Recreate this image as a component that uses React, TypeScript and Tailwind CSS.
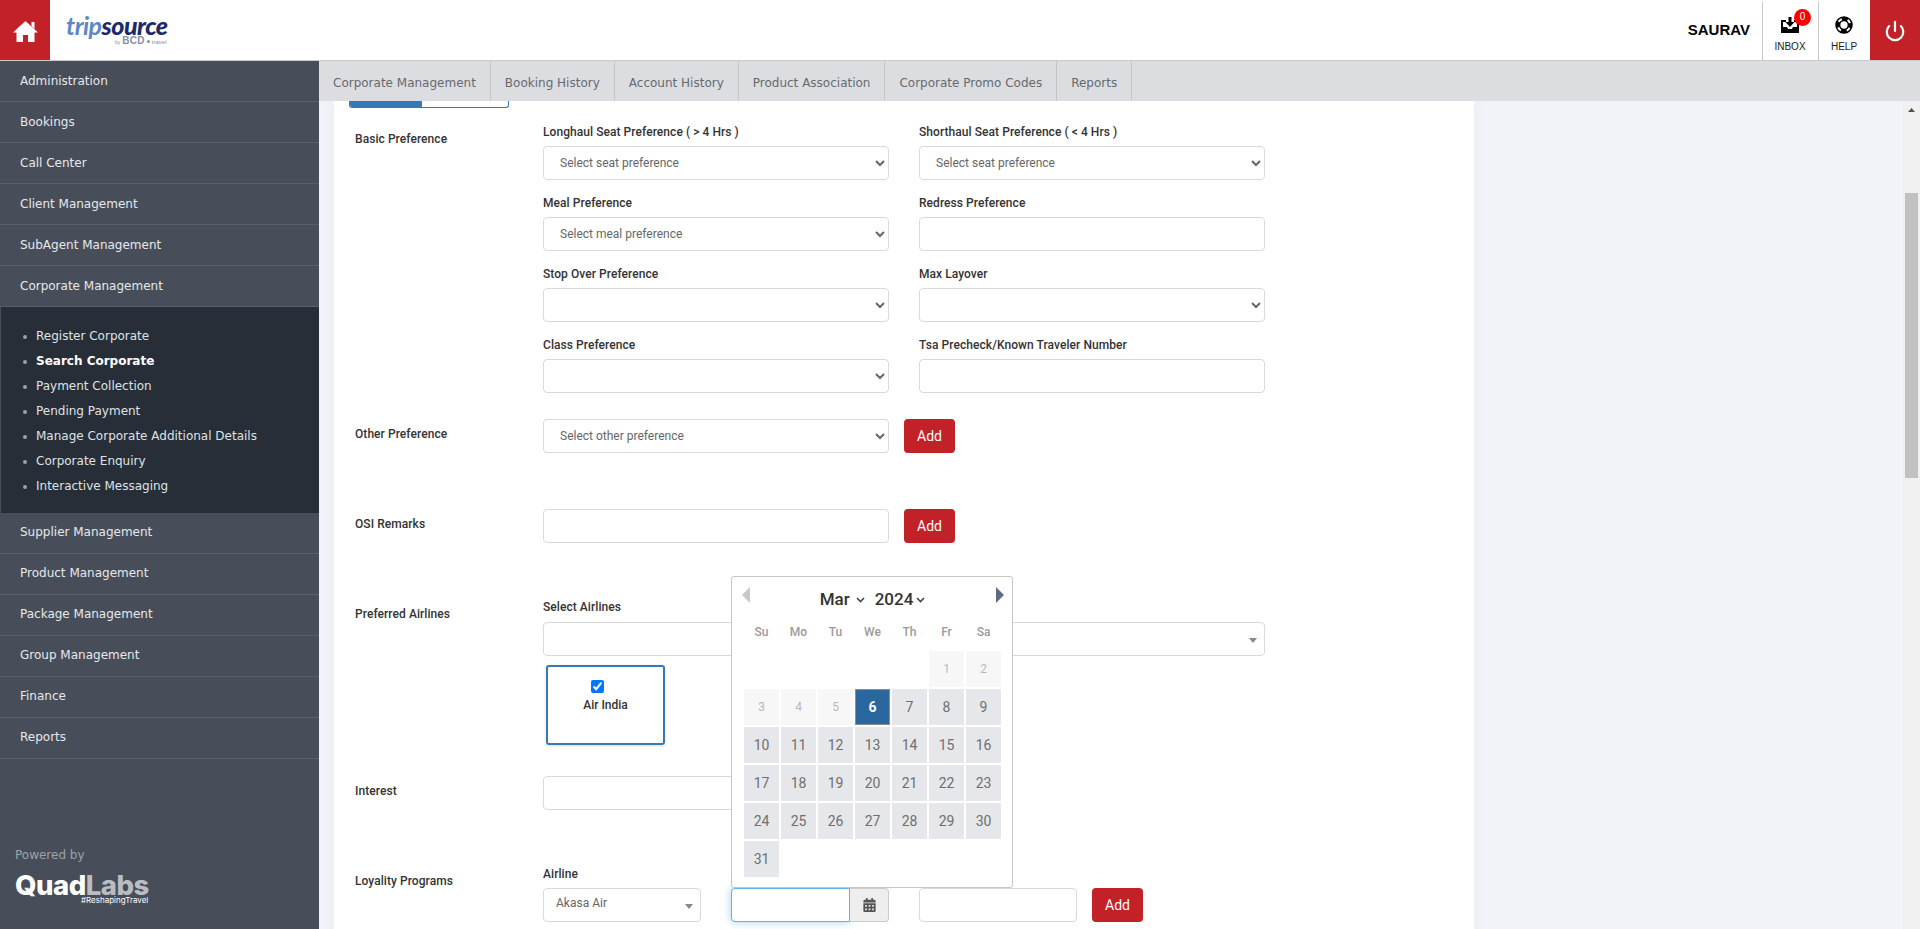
import React from 'react';
import { Power } from 'lucide-react';
import { FaCalendarAlt } from 'react-icons/fa';

const sideItems = ['Administration', 'Bookings', 'Call Center', 'Client Management', 'SubAgent Management', 'Corporate Management'];
const sideItemsAfter = ['Supplier Management', 'Product Management', 'Package Management', 'Group Management', 'Finance', 'Reports'];
const subItems = ['Register Corporate', 'Search Corporate', 'Payment Collection', 'Pending Payment', 'Manage Corporate Additional Details', 'Corporate Enquiry', 'Interactive Messaging'];
const tabs = ['Corporate Management', 'Booking History', 'Account History', 'Product Association', 'Corporate Promo Codes', 'Reports'];
const weekDays = ['Su', 'Mo', 'Tu', 'We', 'Th', 'Fr', 'Sa'];

const inputClass = 'h-[34px] border border-[#d9d9d9] rounded-[4px] bg-white';
const selectClass = 'h-[34px] border border-[#d9d9d9] rounded-[4px] bg-white pl-3 text-[12px] text-[#666]';
const labelClass = 'text-[12px] leading-[14px] font-medium tracking-[0.06px] text-[#333]';

function Field({ label, children }: { label: string; children: React.ReactNode }) {
    return (
        <div className="w-[346px] h-[71px]">
            <label className={`block h-[22px] pt-[1px] ${labelClass}`}>{label}</label>
            {children}
        </div>
    );
}

function AddButton() {
    return (
        <button className="w-[51px] h-[34px] rounded-[4px] bg-[#c32128] text-white text-[14px]">Add</button>
    );
}

function Caret() {
    return (
        <svg width="8" height="5" viewBox="0 0 8 5" className="absolute right-[7px] top-[15px]">
            <path d="M0 0h8L4 5z" fill="#888" />
        </svg>
    );
}

function RowLabel({ children, top }: { children: React.ReactNode; top: string }) {
    return <div className={`w-[209px] shrink-0 pl-[21px] ${labelClass} ${top}`}>{children}</div>;
}

function Calendar() {
    const blanks = [0, 1, 2, 3, 4];
    const days = Array.from({ length: 31 }, (_, i) => i + 1);
    return (
        <div className="absolute left-0 bottom-full z-10 w-[282px] h-[312px] bg-white border border-[#c5c5c5] rounded-[3px] pt-[10px] pl-[12px]">
            <div className="relative h-[26px] w-[257px] flex items-center justify-center gap-[10px] text-[17px] font-medium text-[#333]">
                <svg width="8" height="16" viewBox="0 0 8 16" className="absolute left-[-2px] top-0"><path d="M8 0v16L0 8z" fill="#c8c8c8" /></svg>
                <span className="flex items-center gap-[6px]">Mar
                    <svg width="9" height="6" viewBox="0 0 9 6"><path d="M1 1l3.5 3.5L8 1" fill="none" stroke="#444" strokeWidth="1.6" /></svg>
                </span>
                <span className="flex items-center gap-[3px]">2024
                    <svg width="9" height="6" viewBox="0 0 9 6"><path d="M1 1l3.5 3.5L8 1" fill="none" stroke="#444" strokeWidth="1.6" /></svg>
                </span>
                <svg width="8" height="16" viewBox="0 0 8 16" className="absolute right-[-3px] top-0"><path d="M0 0v16l8-8z" fill="#5f6b85" /></svg>
            </div>
            <div className="grid grid-cols-[repeat(7,35px)] gap-x-[2px] mt-[10px] h-[28px] text-[12px] font-medium text-[#9a9a9a] text-center">
                {weekDays.map((d) => <div key={d}>{d}</div>)}
            </div>
            <div className="grid grid-cols-[repeat(7,35px)] gap-x-[2px] gap-y-[2px] auto-rows-[36px]">
                {blanks.map((b) => <div key={b} />)}
                {days.map((d) => {
                    if (d === 6) {
                        return <div key={d} className="flex items-center justify-center bg-[#2a679f] border border-[#8a8f96] text-white text-[14px] font-bold">{d}</div>;
                    }
                    if (d < 6) {
                        return <div key={d} className="flex items-center justify-center bg-[#f7f7f7] text-[#b8b8b8] text-[12px]">{d}</div>;
                    }
                    return <div key={d} className="flex items-center justify-center bg-[#e6e7ea] text-[#6f6f6f] text-[14px]">{d}</div>;
                })}
            </div>
        </div>
    );
}

function Sidebar() {
    return (
        <aside className="w-[319px] shrink-0 bg-[#474e5a] flex flex-col text-[12px] text-[#e6e8ea] font-['DejaVu_Sans',sans-serif]">
            {sideItems.map((s) => (
                <div key={s} className="h-[41px] pl-5 pt-[12px] leading-[16px] border-b border-[#5a616c]">{s}</div>
            ))}
            <ul className="h-[206px] bg-[#272e38] border-l border-[#474e5a] pl-[35px] pt-[17px] text-[12px] text-[#dfe2e5]">
                {subItems.map((s) => (
                    <li key={s} className={`relative h-[25px] leading-[25px] ${s === 'Search Corporate' ? 'font-bold text-white' : ''}`}>
                        <span className="absolute left-[-13px] top-[11px] w-[4px] h-[4px] rounded-full bg-[#9aa0a8]" />
                        {s}
                    </li>
                ))}
            </ul>
            {sideItemsAfter.map((s) => (
                <div key={s} className="h-[41px] pl-5 pt-[11px] leading-[16px] border-b border-[#5a616c]">{s}</div>
            ))}
            <div className="mt-[89px] pl-[15px] text-[#9ca1a8] leading-[14px]">Powered by</div>
            <div className="mt-[12px] pl-[15px] font-['Inter',sans-serif] font-extrabold text-[27.5px] leading-[22px] tracking-[-0.5px]">
                <span className="text-white">Quad</span><span className="text-[#b9bdc3]">Labs</span>
            </div>
            <div className="pl-[81px] font-['Inter',sans-serif] text-[8px] leading-[9px] text-white">#ReshapingTravel</div>
        </aside>
    );
}

function Header() {
    return (
        <header className="h-[61px] shrink-0 flex bg-white border-b border-[#c9cbcb]">
            <div className="w-[50px] bg-[#c32128] flex items-center justify-center pt-[2px]">
                <svg width="25" height="21" viewBox="0 0 25 21">
                    <path d="M12.5 0L25 11.5h-3.5V21H15v-7h-5v7H3.5v-9.5H0z" fill="#fff" />
                    <path d="M18.5 1H21.5V8l-3-3z" fill="#fff" />
                </svg>
            </div>
            <div className="ml-[16px] pt-[11px] w-[110px]">
                <div className="font-['Lato',sans-serif] italic font-black text-[25px] leading-[28px] tracking-[-0.5px]">
                    <span className="text-[#5b87c5] font-bold">trip</span><span className="text-[#1c2a6a]">source</span>
                </div>
                <div className="relative pl-[49px] -mt-[2px] flex items-baseline gap-[2px] font-['Liberation_Sans',sans-serif] text-[#8a8fa0] leading-[8px]">
                    <span className="text-[5px]">by</span>
                    <span className="text-[10px] font-bold tracking-[0.3px]">BCD</span>
                    <span className="w-[3px] h-[3px] rounded-full bg-[#8a8fa0] self-center" />
                    <span className="text-[6px]">travel</span>
                </div>
            </div>
            <div className="ml-auto flex font-['Liberation_Sans',sans-serif] text-black">
                <div className="pr-3 pt-[20px] text-[15px] font-bold leading-[20px]">SAURAV</div>
                <div className="relative w-[56px] mt-[2px] border-l border-[#c9c9c9] flex flex-col items-center pt-[15px]">
                    <svg width="18" height="16" viewBox="0 0 18 16" className="-ml-[1px]">
                        <path d="M0 3h5v2H2v5h4l1 2h4l1-2h4V5h-3V3h5v13H0z" fill="#000" />
                        <path d="M7.5 0h3v5h3L9 10 4.5 5h3z" fill="#000" />
                    </svg>
                    <span className="absolute left-[31px] top-[7px] w-[17px] h-[17px] rounded-full bg-[#f00] text-white text-[10px] leading-[16px] text-center">0</span>
                    <span className="mt-[8px] -ml-[1px] text-[10px] leading-[12px] text-[#222]">INBOX</span>
                </div>
                <div className="w-[52px] mt-[2px] border-l border-[#c9c9c9] flex flex-col items-center pt-[14px]">
                    <svg width="18" height="18" viewBox="0 0 18 18" className="-ml-[1px]">
                        <circle cx="9" cy="9" r="8" fill="none" stroke="#000" strokeWidth="1.5" />
                        <circle cx="9" cy="9" r="4.4" fill="none" stroke="#000" strokeWidth="1.5" />
                        <circle cx="9" cy="9" r="6.2" fill="none" stroke="#000" strokeWidth="3.6" strokeDasharray="6 3.74" strokeDashoffset="3" />
                    </svg>
                    <span className="mt-[7px] -ml-[1px] text-[10px] leading-[12px] text-[#222]">HELP</span>
                </div>
                <div className="w-[50px] bg-[#c32128] flex items-center justify-center pt-[1px]">
                    <Power className="text-white" size={22} strokeWidth={2.4} />
                </div>
            </div>
        </header>
    );
}

function Form() {
    return (
        <div className="w-[1140px] ml-[15px] pb-[60px] bg-white shadow-[0_0_15px_rgba(0,0,0,0.04)] font-['Roboto',sans-serif]">
            <div className="ml-[15px] w-[160px] h-[7px] flex rounded-b-[3px] border border-t-0 border-[#337ab7] overflow-hidden">
                <div className="w-[72px] bg-[#337ab7]" />
            </div>

            <div className="flex mt-[16px]">
                <RowLabel top="pt-[8px]">Basic Preference</RowLabel>
                <div className="flex gap-x-[30px] flex-wrap w-[722px]">
                    <Field label="Longhaul Seat Preference ( > 4 Hrs )">
                        <select className={`${selectClass} w-full`}><option>Select seat preference</option></select>
                    </Field>
                    <Field label="Shorthaul Seat Preference ( < 4 Hrs )">
                        <select className={`${selectClass} w-full`}><option>Select seat preference</option></select>
                    </Field>
                    <Field label="Meal Preference">
                        <select className={`${selectClass} w-full`}><option>Select meal preference</option></select>
                    </Field>
                    <Field label="Redress Preference">
                        <input className={`${inputClass} w-full`} />
                    </Field>
                    <Field label="Stop Over Preference">
                        <select className={`${selectClass} w-full`}><option></option></select>
                    </Field>
                    <Field label="Max Layover">
                        <select className={`${selectClass} w-full`}><option></option></select>
                    </Field>
                    <Field label="Class Preference">
                        <select className={`${selectClass} w-full`}><option></option></select>
                    </Field>
                    <Field label="Tsa Precheck/Known Traveler Number">
                        <input className={`${inputClass} w-full`} />
                    </Field>
                </div>
            </div>

            <div className="flex mt-[11px] h-[34px]">
                <RowLabel top="pt-[8px]">Other Preference</RowLabel>
                <select className={`${selectClass} w-[346px]`}><option>Select other preference</option></select>
                <div className="ml-[15px]"><AddButton /></div>
            </div>

            <div className="flex mt-[56px] h-[34px]">
                <RowLabel top="pt-[8px]">OSI Remarks</RowLabel>
                <input className={`${inputClass} w-[346px]`} />
                <div className="ml-[15px]"><AddButton /></div>
            </div>

            <div className="flex mt-[56px]">
                <RowLabel top="pt-[8px]">Preferred Airlines</RowLabel>
                <div>
                    <label className={`block h-[23px] pt-[1px] ${labelClass}`}>Select Airlines</label>
                    <div className={`${inputClass} w-[722px] relative border-[#c9c9c9]`}><Caret /></div>
                    <div className="ml-[3px] mt-[9px] w-[119px] h-[80px] border-2 border-[#337ab7] rounded-[3px] flex flex-col items-center pt-[13px] shadow-[0_1px_3px_rgba(0,0,0,0.15)]">
                        <input type="checkbox" defaultChecked className="w-[13px] h-[13px] -ml-[16px] accent-[#0075ff]" />
                        <span className="mt-[4px] text-[12px] leading-[16px] font-medium text-[#333]">Air India</span>
                    </div>
                </div>
            </div>

            <div className="flex mt-[31px] h-[34px]">
                <RowLabel top="pt-[8px]">Interest</RowLabel>
                <input className={`${inputClass} w-[346px]`} />
            </div>

            <div className="flex mt-[55px]">
                <RowLabel top="pt-[9px]">Loyality Programs</RowLabel>
                <div>
                    <label className={`block h-[23px] pt-[2px] ${labelClass}`}>Airline</label>
                    <div className="flex">
                        <div className={`${inputClass} border-[#c9c9c9] w-[158px] relative pl-3 leading-[28px] text-[12px] text-[#666]`}>
                            Akasa Air
                            <Caret />
                        </div>
                        <div className="relative ml-[30px] w-[158px] flex">
                            <Calendar />
                            <input className="w-[119px] h-[34px] border border-[#66afe9] rounded-l-[4px] bg-white shadow-[0_0_8px_rgba(102,175,233,0.6)]" />
                            <div className="w-[39px] h-[34px] bg-[#eeeeee] border border-l-0 border-[#cccccc] rounded-r-[4px] flex items-center justify-center">
                                <FaCalendarAlt className="text-[#555] w-[13px] h-[14px]" />
                            </div>
                        </div>
                        <input className={`${inputClass} w-[158px] ml-[30px]`} />
                        <div className="ml-[15px]"><AddButton /></div>
                    </div>
                </div>
            </div>
        </div>
    );
}

export default function App() {
    return (
        <div className="h-[929px] w-full overflow-hidden flex flex-col bg-[#f1f3f8]">
            <Header />
            <div className="flex flex-1 min-h-0">
                <Sidebar />
                <main className="flex-1 flex flex-col min-w-0">
                    <nav className="h-[40px] shrink-0 bg-[#dcdde1] flex font-['DejaVu_Sans',sans-serif] text-[12px] text-[#666a70]">
                        {tabs.map((t) => (
                            <div key={t} className="h-[40px] px-[14px] leading-[45px] border-r border-[#c4c6ca] whitespace-nowrap">{t}</div>
                        ))}
                    </nav>
                    <div className="flex flex-1 min-h-0">
                        <div className="flex-1 min-w-0 overflow-hidden"><Form /></div>
                        <div className="w-[17px] shrink-0 bg-[#f1f1f1] flex flex-col items-center">
                            <svg width="7" height="4" viewBox="0 0 7 4" className="mt-[7px]"><path d="M0 4h7L3.5 0z" fill="#505050" /></svg>
                            <div className="mt-[81px] w-[13px] h-[285px] bg-[#c1c1c1]" />
                        </div>
                    </div>
                </main>
            </div>
        </div>
    );
}
